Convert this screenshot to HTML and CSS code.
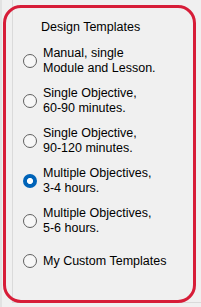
FILE: index.html
```html
<!DOCTYPE html>
<html>
    <head>
        <meta charset="utf-8">
        <title>Design Templates</title>
        <link rel="stylesheet" href="styles.css">
    </head>
    <body>
        <div class="page">
            <div class="frame">
                <p class="title">Design Templates</p>
                <form class="choices">
                    <label class="choice">
                        <input type="radio" name="tpl">
                        <span>Manual, single<br>Module and Lesson.</span>
                    </label>
                    <label class="choice">
                        <input type="radio" name="tpl">
                        <span>Single Objective,<br>60-90 minutes.</span>
                    </label>
                    <label class="choice">
                        <input type="radio" name="tpl">
                        <span>Single Objective,<br>90-120 minutes.</span>
                    </label>
                    <label class="choice">
                        <input type="radio" name="tpl" checked>
                        <span>Multiple Objectives,<br>3-4 hours.</span>
                    </label>
                    <label class="choice">
                        <input type="radio" name="tpl">
                        <span>Multiple Objectives,<br>5-6 hours.</span>
                    </label>
                    <label class="choice">
                        <input type="radio" name="tpl">
                        <span>My Custom Templates</span>
                    </label>
                </form>
            </div>
        </div>
    </body>
</html>
```

FILE: styles.css
```css
*{margin:0;padding:0;box-sizing:border-box}
body{
    background:#f0f0f0;
    font-family:"Liberation Sans", Arial, sans-serif;
    font-size:12.5px;
    color:#000;
}
.page{
    width:201px;
    height:307px;
    padding:5px 0 0 3px;
    background:
        linear-gradient(#dadada,#dadada) 12px 0/1px 303px no-repeat,
        linear-gradient(#dadada,#dadada) 12px 302px/189px 1px no-repeat,
        linear-gradient(#e2e2e2,#e2e2e2) 0 0/2px 100% no-repeat,
        #f0f0f0;
}
.frame{
    width:193px;
    height:298px;
    border:3px solid #d71d38;
    border-radius:18px;
    padding:12px 0 0 17px;
}
.title{
    line-height:15px;
    padding-left:18px;
    margin-bottom:11px;
}
.choices{
    display:flex;
    flex-direction:column;
    gap:10px;
}
.choice{
    display:flex;
    align-items:center;
    min-height:30px;
    line-height:15px;
}
.choice input{
    appearance:none;
    -webkit-appearance:none;
    flex:none;
    width:14px;
    height:14px;
    margin-right:6px;
    border:1px solid #606060;
    border-radius:50%;
    background:#f7f7f7;
}
.choice input:checked{
    border:none;
    background:radial-gradient(circle, #fff 0 2.7px, #0063b8 3.4px);
}
```
